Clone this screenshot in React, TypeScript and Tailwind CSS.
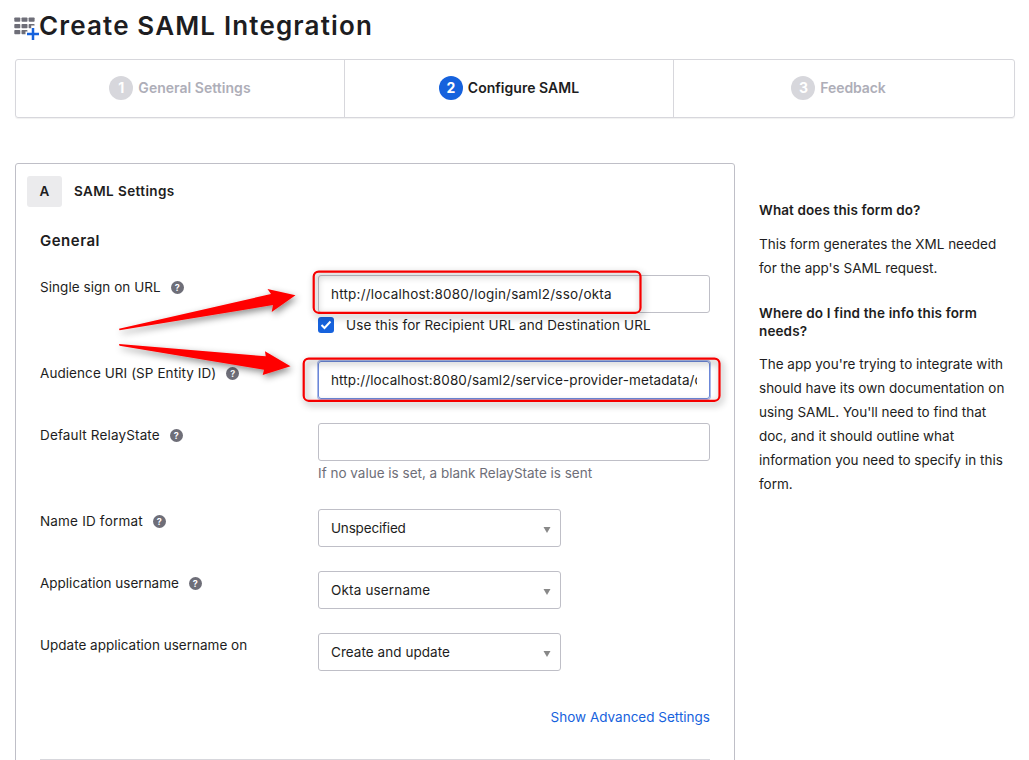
import type { ReactNode } from "react";

function AppGridIcon() {
  return (
    <svg width="26" height="26" viewBox="0 0 26 26" className="shrink-0" aria-hidden="true">
      <g fill="#6e6e78">
        <rect x="0.3" y="2.5" width="6" height="4.3" rx="0.8" />
        <rect x="7.5" y="2.5" width="6" height="4.3" rx="0.8" />
        <rect x="14.6" y="2.5" width="6" height="4.3" rx="0.8" />
        <rect x="0.3" y="9" width="6" height="4.3" rx="0.8" />
        <rect x="7.5" y="9" width="6" height="4.3" rx="0.8" />
        <path d="M15.4 9h4.4q.8 0 .8.8v.6h-3.400v2.900h-1.800q-.8 0-.8-.8V9.800q0-.8.8-.8z" />
        <rect x="0.3" y="15" width="6" height="4.200" rx="0.8" />
        <path d="M8.300 15h4.400q.8 0 .8.8v.8h-2v2.600H8.300q-.8 0-.8-.8v-2.600q0-.8.8-.8z" />
      </g>
      <path d="M19 13v12M13 19h12" stroke="#1662dd" strokeWidth="2.500" />
    </svg>
  );
}

function HelpIcon() {
  return (
    <span className="flex size-[13px] shrink-0 items-center justify-center rounded-full bg-[#6e6e78] text-[9px] leading-none font-bold text-white">
      ?
    </span>
  );
}

function Step({ n, active, children, last }: { n: number; active?: boolean; last?: boolean; children: ReactNode }) {
  return (
    <li
      className={
        last
          ? "flex w-[329px] items-center justify-center gap-[5px] pb-0.5 tracking-[-0.1px]"
          : "flex w-[329px] items-center justify-center gap-[5px] border-r border-[#d7d7dc] pb-0.5 tracking-[0.03px]"
      }
    >
      <span
        className={
          active
            ? "flex size-6 items-center justify-center rounded-full bg-[#1662dd] text-[14px] font-bold text-white"
            : "flex size-6 items-center justify-center rounded-full bg-[#d7d7dc] text-[14px] font-bold text-white"
        }
      >
        {n}
      </span>
      <span className={active ? "font-semibold text-[#1d1d21]" : "font-semibold text-[#aeaeb8]"}>{children}</span>
    </li>
  );
}

function Row({ label, help, className, children }: { label: ReactNode; help?: boolean; className: string; children: ReactNode }) {
  return (
    <div className={className}>
      <div className="flex h-6 w-[278px] shrink-0 items-center gap-[10px]">
        {label}
        {help && <HelpIcon />}
      </div>
      <div className="w-[392px]">{children}</div>
    </div>
  );
}

function SelectBox({ children }: { children: ReactNode }) {
  return (
    <div className="flex h-[38px] w-[243px] items-center justify-between rounded-[3px] border border-[#bfbfc7] pr-[9px] pl-3">
      {children}
      <svg width="8" height="6" viewBox="0 0 8 6" className="mt-[3px]" aria-hidden="true">
        <path d="M.5 0h7L4 6z" fill="#888" />
      </svg>
    </div>
  );
}

function Annotations() {
  return (
    <svg
      width="1029"
      height="760"
      viewBox="0 0 1029 760"
      className="pointer-events-none absolute top-0 left-0"
      aria-hidden="true"
    >
      <defs>
        <filter id="shade" x="-20%" y="-40%" width="140%" height="190%">
          <feDropShadow dx="2" dy="3" stdDeviation="3.500" floodColor="#000" floodOpacity="0.45" />
        </filter>
      </defs>
      <g filter="url(#shade)" fill="none" stroke="#f50505" strokeWidth="2.200">
        <rect x="313.700" y="271.600" width="326.800" height="41.200" rx="5" />
        <rect x="303.700" y="358.600" width="415.800" height="42.200" rx="5" />
      </g>
      <g filter="url(#shade)" fill="#f00">
        <path d="M119 328.700L271 294L267.500 289L295.500 295.300L271.700 312L273 305L119.500 330.300z" />
        <path d="M119 344L265.700 356.300L265 351.300L290.500 366.300L262.700 375L264 369.700L119.500 345.700z" />
      </g>
    </svg>
  );
}

export default function App() {
  return (
    <div className="relative h-[760px] w-[1029px] overflow-hidden bg-white font-['Inter','Liberation_Sans',sans-serif] text-[13.5px] leading-6 text-[#1d1d21]">
      <header className="flex h-[59px] items-start pl-[14px]">
        <div className="-mr-px pt-[15px]">
          <AppGridIcon />
        </div>
        <h1 className="pt-[10px] text-[26px] leading-8 font-semibold tracking-[1.15px] whitespace-nowrap">Create SAML Integration</h1>
      </header>

      <ol className="ml-[15px] flex h-[59px] w-[1000px] rounded-[3px] border border-[#d7d7dc] text-[14px] shadow-[0_1px_1px_rgba(0,0,0,0.06)]">
        <Step n={1}>General Settings</Step>
        <Step n={2} active>
          Configure SAML
        </Step>
        <Step n={3} last>
          Feedback
        </Step>
      </ol>

      <div className="mt-[45px] ml-[15px] flex">
        <main className="h-[620px] w-[720px] shrink-0 rounded-t-[3px] border border-[#bfbfc7] pl-[24px]">
          <div className="-ml-[13px] flex items-center gap-3 pt-[12px]">
            <span className="flex h-[31px] w-[35px] items-center justify-center rounded-[3px] bg-[#ebebed] pb-px font-semibold">A</span>
            <h2 className="pb-0.5 font-semibold tracking-[0.4px]">SAML Settings</h2>
          </div>
          <h3 className="mt-[22px] text-[15px] leading-6 font-semibold tracking-[0.5px]">General</h3>

          <Row label="Single sign on URL" help className="mt-[22px] flex h-[86px] tracking-[0.05px]">
            <div className="h-[38px] rounded-[3px] border border-[#bfbfc7] px-3 leading-[37px] tracking-[0.21px]">
              http://localhost:8080/login/saml2/sso/okta
            </div>
            <div className="flex items-center gap-3 tracking-[0.11px]">
              <span className="flex size-4 items-center justify-center rounded-[3px] bg-[#1662dd]">
                <svg width="12" height="10" viewBox="0 0 12 10" fill="none" aria-hidden="true">
                  <path d="M1.500 5l3 3L10.500 1.500" stroke="#fff" strokeWidth="2" />
                </svg>
              </span>
              Use this for Recipient URL and Destination URL
            </div>
          </Row>
          <Row label="Audience URI (SP Entity ID)" help className="flex h-[62px] tracking-[0.07px]">
            <div className="h-[38px] rounded-[3px] border border-[#6b87d8] px-3 leading-[37px] tracking-[0.11px] shadow-[0_0_0_1px_#a9b9e8]">
              <div className="overflow-hidden whitespace-nowrap">http://localhost:8080/saml2/service-provider-metadata/o</div>
            </div>
          </Row>
          <Row label="Default RelayState" help className="flex h-[86px] tracking-[0.15px]">
            <div className="h-[38px] rounded-[3px] border border-[#bfbfc7]" />
            <p className="tracking-normal text-[#6e6e78]">If no value is set, a blank RelayState is sent</p>
          </Row>
          <Row label="Name ID format" help className="flex h-[62px] tracking-[0.18px]">
            <SelectBox>
              <span className="tracking-[-0.18px]">Unspecified</span>
            </SelectBox>
          </Row>
          <Row label="Application username" help className="flex h-[62px] tracking-normal">
            <SelectBox>
              <span className="tracking-[0.16px]">Okta username</span>
            </SelectBox>
          </Row>
          <Row label="Update application username on" className="flex h-[62px] tracking-normal">
            <SelectBox>
              <span className="tracking-[0.05px]">Create and update</span>
            </SelectBox>
          </Row>
          <div className="flex h-[65px] w-[670px] justify-end border-b border-[#d7d7dc] pt-[10px]">
            <a className="text-[#1662dd]">Show Advanced Settings</a>
          </div>
        </main>

        <aside className="ml-6 w-[256px] pt-[38px]">
          <h4 className="leading-[18px] font-semibold tracking-[0.11px] whitespace-nowrap">What does this form do?</h4>
          <p className="mt-[13px] whitespace-nowrap">
            This form generates the XML needed
            <br />
            for the app's SAML request.
          </p>
          <h4 className="mt-[24px] leading-[18px] font-semibold tracking-[0.13px] whitespace-nowrap">
            Where do I find the info this form
            <br />
            needs?
          </h4>
          <p className="mt-[12px] whitespace-nowrap">
            The app you're trying to integrate with
            <br />
            should have its own documentation on
            <br />
            using SAML. You'll need to find that
            <br />
            doc, and it should outline what
            <br />
            information you need to specify in this
            <br />
            form.
          </p>
        </aside>
      </div>
      <Annotations />
    </div>
  );
}
